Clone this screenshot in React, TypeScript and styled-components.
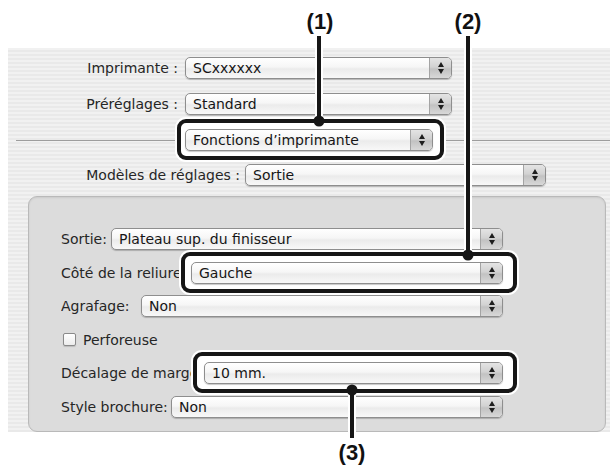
import React from 'react';
import styled, { createGlobalStyle } from 'styled-components';

const GlobalStyle = createGlobalStyle`
  html, body {
    margin: 0;
    padding: 0;
    background: #ffffff;
  }
  * {
    box-sizing: border-box;
  }
`;

const Page = styled.div`
  position: relative;
  width: 610px;
  height: 475px;
  overflow: hidden;
  background: #ffffff;
  font-family: 'DejaVu Sans', 'Liberation Sans', sans-serif;
  font-size: 14px;
  color: #262626;
`;

const Header = styled.div`
  height: 48px;
`;

const Dialog = styled.div`
  margin-left: 8px;
  width: 602px;
  height: 384px;
  display: flex;
  flex-direction: column;
  background: repeating-linear-gradient(to bottom, #f1f1f1 0 2px, #e9e9e9 2px 4px);
`;

const TopSection = styled.div`
  display: flex;
  flex-direction: column;
  gap: 14px;
  padding-top: 9px;
`;

const Row = styled.div<{ $gap?: number }>`
  display: flex;
  align-items: center;
  height: 22px;
  gap: ${(p) => p.$gap ?? 0}px;
`;

const Label = styled.div<{ $w: number; $right?: boolean }>`
  flex: none;
  width: ${(p) => p.$w}px;
  text-align: ${(p) => (p.$right ? 'right' : 'left')};
  white-space: nowrap;
  overflow: hidden;
  line-height: 22px;
`;

const Rule = styled.div<{ $w?: number; $ml?: number }>`
  height: 1px;
  background: #9d9d9d;
  flex: ${(p) => (p.$w ? `0 0 ${p.$w}px` : '1')};
  margin-left: ${(p) => p.$ml ?? 0}px;
`;

const Popup = styled.div<{ $w?: number }>`
  display: flex;
  height: 22px;
  flex: ${(p) => (p.$w ? `0 0 ${p.$w}px` : '1')};
  border: 1px solid #8e8e8e;
  border-radius: 5px;
  overflow: hidden;
  background: linear-gradient(to bottom, #ffffff 0%, #f6f6f6 45%, #ebebeb 55%, #f8f8f8 100%);
  box-shadow: 0 1px 1px rgba(0, 0, 0, 0.22);
`;

const PopupText = styled.div`
  flex: 1;
  padding-left: 7px;
  line-height: 20px;
  color: #161616;
  white-space: nowrap;
  overflow: hidden;
`;

const Arrows = styled.div`
  flex: 0 0 22px;
  border-left: 1px solid #a4a4a4;
  background: linear-gradient(to bottom, #e4e4e4 0%, #d2d2d2 45%, #c2c2c2 55%, #d8d8d8 100%);
  display: flex;
  flex-direction: column;
  align-items: center;
  justify-content: center;
  gap: 2px;
`;

const Tri = styled.span<{ $down?: boolean }>`
  width: 0;
  height: 0;
  border-left: 3px solid transparent;
  border-right: 3px solid transparent;
  ${(p) => (p.$down ? 'border-top: 5px solid #1e1e1e;' : 'border-bottom: 5px solid #1e1e1e;')}
`;

/* thick black frame drawn round a popup; negative margins keep the popup where it was */
const Highlight = styled.div<{ $r: number; $l: number; $w?: number }>`
  position: relative;
  z-index: 2;
  display: flex;
  flex: ${(p) => (p.$w ? `0 0 ${p.$w}px` : '1')};
  margin: -10px -${(p) => p.$r}px -9px -${(p) => p.$l}px;
  padding: 6px ${(p) => p.$r - 4}px 5px ${(p) => p.$l - 4}px;
  border: 4px solid #161616;
  border-radius: 9px;
  background: #ffffff;
  box-shadow: 0 0 0 2px #ffffff;
`;

const ModelRow = styled(Row)`
  margin-top: 13px;
`;

const Panel = styled.div`
  flex: 1;
  margin: 10px 4px 1px 20px;
  padding: 31px 102px 13px 32px;
  display: flex;
  flex-direction: column;
  gap: 11.5px;
  border: 1px solid #b9b9b9;
  border-radius: 9px;
  background: #dcdcdc;
  box-shadow: inset 0 1px 2px rgba(0, 0, 0, 0.08);
`;

const CheckRow = styled(Row)`
  padding-left: 2px;
`;

const CheckBox = styled.span`
  width: 13px;
  height: 13px;
  border: 1px solid #8a8a8a;
  border-radius: 2px;
  background: linear-gradient(to bottom, #ffffff, #ececec);
  box-shadow: 0 1px 1px rgba(0, 0, 0, 0.15);
`;

const Overlay = styled.svg`
  position: absolute;
  left: 0;
  top: 0;
  z-index: 5;
  pointer-events: none;
`;

const Callout = styled.span<{ $x: number; $y: number }>`
  position: absolute;
  left: ${(p) => p.$x}px;
  top: ${(p) => p.$y}px;
  transform: translateX(-50%);
  font-family: 'Liberation Sans', Arial, sans-serif;
  font-weight: bold;
  font-size: 22px;
  line-height: 24px;
  color: #111111;
`;

type PopProps = { value: string; w?: number };

const Pop: React.FC<PopProps> = ({ value, w }) => (
  <Popup $w={w}>
    <PopupText>{value}</PopupText>
    <Arrows>
      <Tri />
      <Tri $down />
    </Arrows>
  </Popup>
);

const lines = [
  { x: 319, y1: 36, y2: 121 },
  { x: 468, y1: 36, y2: 255 },
  { x: 352, y1: 390, y2: 438 },
];

const App: React.FC = () => {
  return (
    <Page>
      <GlobalStyle />
      <Header />
      <Dialog>
        <TopSection>
          <Row $gap={7}>
            <Label $w={170} $right>Imprimante :</Label>
            <Pop value="SCxxxxxx" w={267} />
          </Row>
          <Row $gap={7}>
            <Label $w={170} $right>Préréglages :</Label>
            <Pop value="Standard" w={267} />
          </Row>
          <Row>
            <Rule $w={169} $ml={8} />
            <Highlight $l={8} $r={11} $w={267}>
              <Pop value="Fonctions d’imprimante" />
            </Highlight>
            <Rule />
          </Row>
        </TopSection>
        <ModelRow $gap={5}>
          <Label $w={232} $right>Modèles de réglages :</Label>
          <Pop value="Sortie" w={301} />
        </ModelRow>
        <Panel>
          <Row>
            <Label $w={50}>Sortie:</Label>
            <Pop value="Plateau sup. du finisseur" />
          </Row>
          <Row>
            <Label $w={130}>Côté de la reliure</Label>
            <Highlight $l={10} $r={14}>
              <Pop value="Gauche" />
            </Highlight>
          </Row>
          <Row>
            <Label $w={80}>Agrafage:</Label>
            <Pop value="Non" />
          </Row>
          <CheckRow $gap={7}>
            <CheckBox />
            <span>Perforeuse</span>
          </CheckRow>
          <Row>
            <Label $w={143}>Décalage de marge</Label>
            <Highlight $l={11} $r={14}>
              <Pop value="10 mm." />
            </Highlight>
          </Row>
          <Row>
            <Label $w={110}>Style brochure:</Label>
            <Pop value="Non" />
          </Row>
        </Panel>
      </Dialog>

      <Overlay width={610} height={475} viewBox="0 0 610 475">
        {lines.map((l, i) => (
          <line key={`w${i}`} x1={l.x} y1={l.y1} x2={l.x} y2={l.y2} stroke="#fff" strokeWidth={8} />
        ))}
        {lines.map((l, i) => (
          <line key={`b${i}`} x1={l.x} y1={l.y1} x2={l.x} y2={l.y2} stroke="#161616" strokeWidth={4} />
        ))}
        <circle cx={319} cy={121} r={5.5} fill="#161616" />
        <circle cx={468} cy={255} r={5.5} fill="#161616" />
        <circle cx={352} cy={390} r={5.5} fill="#161616" />
      </Overlay>
      <Callout $x={320} $y={10}>(1)</Callout>
      <Callout $x={468} $y={10}>(2)</Callout>
      <Callout $x={352} $y={441}>(3)</Callout>
    </Page>
  );
};

export default App;
